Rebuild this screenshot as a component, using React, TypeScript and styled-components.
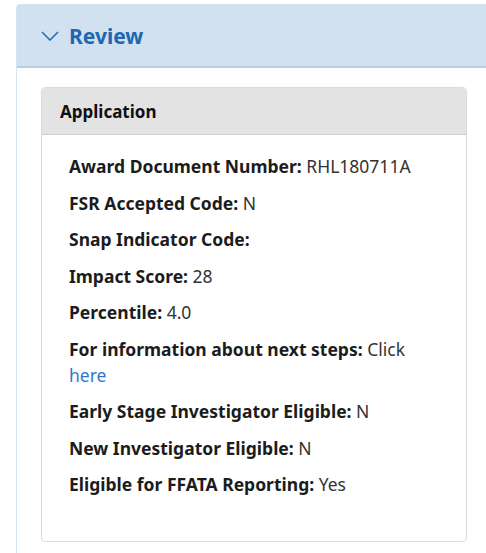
import styled, { createGlobalStyle } from "styled-components";
import { FC } from "react";

const GlobalStyle = createGlobalStyle`
  html, body {
    margin: 0;
    padding: 0;
    background: #fff;
  }
  body {
    font-family: "Noto Sans", "Open Sans", sans-serif;
    color: #212529;
  }
`;

type Field = { label: string; value?: string; link?: string };

const fields: Field[] = [
  { label: "Award Document Number:", value: "RHL180711A" },
  { label: "FSR Accepted Code:", value: "N" },
  { label: "Snap Indicator Code:" },
  { label: "Impact Score:", value: "28" },
  { label: "Percentile:", value: "4.0" },
  { label: "For information about next steps:", value: "Click", link: "here" },
  { label: "Early Stage Investigator Eligible:", value: "N" },
  { label: "New Investigator Eligible:", value: "N" },
  { label: "Eligible for FFATA Reporting:", value: "Yes" },
];

const Chevron: FC = () => (
  <svg width="18" height="10" viewBox="0 0 18 10" fill="none">
    <path d="M1 1 L9 9 L17 1" stroke="#2a6ebb" strokeWidth="1.6" />
  </svg>
);

const App: FC = () => (
  <>
    <GlobalStyle />
    <Page>
      <Panel>
        <PanelHeader>
          <Chevron />
          <PanelTitle>Review</PanelTitle>
        </PanelHeader>
        <PanelBody>
          <Card>
            <CardHeader>Application</CardHeader>
            <CardBody>
              {fields.map((f) => (
                <Row key={f.label}>
                  <Label>{f.label}</Label>
                  {f.value && <Value> {f.value}</Value>}
                  {f.link && (
                    <>
                      {" "}
                      <Link href="#">{f.link}</Link>
                    </>
                  )}
                </Row>
              ))}
            </CardBody>
          </Card>
        </PanelBody>
      </Panel>
    </Page>
  </>
);

const Page = styled.div`
  padding: 4px 0 0 16px;
  width: 486px;
  height: 553px;
  box-sizing: border-box;
  overflow: hidden;
`;

const Panel = styled.section`
  width: 520px;
  border: 1px solid #d6e3f0;
  border-radius: 4px 0 0 0;
`;

const PanelHeader = styled.div`
  height: 61px;
  background: #d1e1f0;
  border-bottom: 2px solid #bccfe2;
  display: flex;
  align-items: center;
  padding-left: 24px;
  gap: 10px;
`;

const PanelTitle = styled.h2`
  margin: 0;
  font-size: 21px;
  font-weight: 700;
  color: #2266b0;
`;

const PanelBody = styled.div`
  padding: 19px 0 20px 24px;
`;

const Card = styled.div`
  width: 426px;
  border: 1px solid #dcdcdc;
  border-radius: 4px;
  box-sizing: border-box;
`;

const CardHeader = styled.div`
  height: 46px;
  background: #e3e3e3;
  border-bottom: 1px solid #cfcfcf;
  border-radius: 4px 4px 0 0;
  display: flex;
  align-items: center;
  padding-left: 18px;
  font-size: 17px;
  font-weight: 700;
  color: #111;
`;

const CardBody = styled.div`
  padding: 18px 30px 44px 27px;
  display: flex;
  flex-direction: column;
  gap: 10.5px;
`;

const Row = styled.div`
  font-size: 17.5px;
  line-height: 26px;
`;

const Label = styled.span`
  font-weight: 700;
  color: #1c1c1c;
`;

const Value = styled.span`
  color: #333;
`;

const Link = styled.a`
  color: #2f78c8;
  text-decoration: none;
`;

export default App;
